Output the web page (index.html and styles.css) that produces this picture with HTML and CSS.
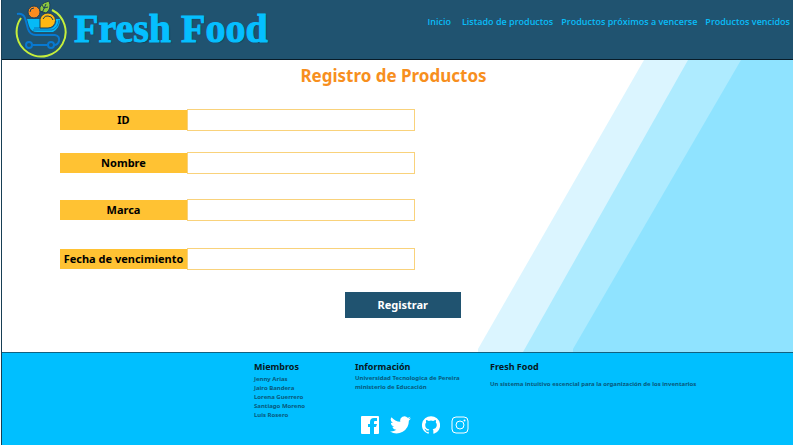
FILE: index.html
```html
<!DOCTYPE html>
<html lang="es">
<head>
<meta charset="utf-8">
<meta name="viewport" content="width=device-width, initial-scale=1">
<title>Fresh Food</title>
<link rel="stylesheet" href="styles.css">
</head>
<body>
<div class="page">
  <header class="header">
    <a class="brand" href="#">
      <svg class="brand-mark" viewBox="0 0 54 60" aria-hidden="true">
        <path d="M8 18A24.500 24.500 0 1 0 39 10" fill="none" stroke="#c6ef3c" stroke-width="2"/>
        <circle cx="21" cy="12" r="6" fill="#fb8c1e" stroke="#1d4057"/>
        <path d="M17 12q0-4 4-4" fill="none" stroke="#1d4057"/>
        <path d="M14 19h33q0 9-7 13H24q-6 0-8-6z" fill="#06baf7"/>
        <path d="M20 30h19q6-2 7-10M21 28h17q4-1 5-7" fill="none" stroke="#0a70b8"/>
        <path d="M27 28V19q2-6 8-6a7.500 7.500 0 0 1 0 15z" fill="#feb813" stroke="#1d4057"/>
        <path d="M30 19q2-4 5-3 4 0 5 4" fill="none" stroke="#1d4057"/>
        <path d="M27 11q-2-7 9-10 3 8-3 12z" fill="#8ac63f" stroke="#1d4057"/>
        <path d="M33 4l-4 9M31 8l4-1M31 8l-2-3" fill="none" stroke="#1d4057"/>
        <path d="M4 14q6-1 8 4l3 11q2 6 8 6h19q5 1 4 6-1 4-5 4H19" fill="none" stroke="#0879d1" stroke-width="2"/>
        <circle cx="16" cy="45" r="3" fill="#205370" stroke="#0879d1" stroke-width="2"/>
        <circle cx="38" cy="45" r="3" fill="#205370" stroke="#0879d1" stroke-width="2"/>
      </svg>
      <span class="brand-name">Fresh Food</span>
    </a>
    <nav class="nav">
      <a href="#">Inicio</a>
      <a href="#">Listado de productos</a>
      <a href="#">Productos próximos a vencerse</a>
      <a href="#">Productos vencidos</a>
    </nav>
  </header>

  <main class="main">
    <svg class="stripes" viewBox="0 0 320 292" preserveAspectRatio="xMaxYMin slice" aria-hidden="true">
      <path d="M171 0H320V292H5V289z" fill="#dbf5ff"/>
      <path d="M215 0H320V292H50z" fill="#aeebff"/>
      <path d="M268 0H320V292H100V289z" fill="#8fe3ff"/>
    </svg>
    <h1 class="title">Registro de Productos</h1>
    <form class="form">
      <div class="fields">
        <div class="field"><label for="id">ID</label><input id="id" type="text"></div>
        <div class="field"><label for="nombre">Nombre</label><input id="nombre" type="text"></div>
        <div class="field"><label for="marca">Marca</label><input id="marca" type="text"></div>
        <div class="field"><label for="fecha">Fecha de vencimiento</label><input id="fecha" type="text"></div>
      </div>
      <button class="submit" type="button">Registrar</button>
    </form>
  </main>

  <footer class="footer">
    <section>
      <h2>Miembros</h2>
      <ul>
        <li>Jenny Arias</li>
        <li>Jairo Bandera</li>
        <li>Lorena Guerrero</li>
        <li>Santiago Moreno</li>
        <li>Luis Rosero</li>
      </ul>
    </section>
    <section class="info">
      <h2>Información</h2>
      <p>Universidad Tecnologica de Pereira</p>
      <p>ministerio de Educación</p>
      <div class="social">
        <a href="#" aria-label="Facebook"><svg viewBox="0 0 18 18"><path fill="#fff" d="M1 0h16q1 0 1 1v16q0 1-1 1h-4v-7h2l1-3h-3V6q0-1 1-1h2V2h-3q-4 0-4 4v2H7v3h2v7H1q-1 0-1-1V1q0-1 1-1z"/></svg></a>
        <a href="#" aria-label="Twitter"><svg class="wide" viewBox="0 0 24 20"><path fill="#fff" d="M24 2.400a9.800 9.800 0 0 1-2.800.8A4.900 4.900 0 0 0 23.300.5a9.900 9.900 0 0 1-3.100 1.200 4.900 4.900 0 0 0-8.400 4.500A14 14 0 0 1 1.700 1a4.900 4.900 0 0 0 1.500 6.600A4.900 4.900 0 0 1 1 7a4.900 4.900 0 0 0 3.900 4.900 5 5 0 0 1-2.200.1 4.900 4.900 0 0 0 4.600 3.400A9.900 9.900 0 0 1 0 17.400 14 14 0 0 0 21.500 5 10 10 0 0 0 24 2.400z"/></svg></a>
        <a href="#" aria-label="GitHub"><svg viewBox="0 0 24 24"><path fill="#fff" d="M12 .3a12 12 0 0 0-3.800 23.400c.6.100.8-.3.800-.6v-2c-3.300.7-4-1.600-4-1.600-.6-1.400-1.400-1.800-1.400-1.800-1-.7.100-.7.100-.7 1.200 0 1.900 1.200 1.900 1.200 1 1.800 2.800 1.300 3.500 1 0-.8.400-1.300.7-1.600-2.700-.3-5.500-1.300-5.500-6 0-1.200.5-2.300 1.300-3.100-.2-.4-.6-1.600 0-3.200 0 0 1-.3 3.400 1.200a11.500 11.500 0 0 1 6 0c2.300-1.500 3.300-1.200 3.300-1.200.7 1.600.2 2.800.1 3.200.8.800 1.300 1.900 1.300 3.200 0 4.600-2.800 5.600-5.500 5.900.5.400.9 1 .9 2.200v3.300c0 .3.100.7.800.6A12 12 0 0 0 12 .3z"/></svg></a>
        <a href="#" aria-label="Instagram"><svg viewBox="0 0 18 18" fill="none" stroke="#fff"><rect x="1" y="1" width="16" height="16" rx="4"/><circle cx="9" cy="9" r="4"/><circle cx="13.500" cy="4.500" r="1" fill="#fff" stroke="none"/></svg></a>
      </div>
    </section>
    <section class="about">
      <h2>Fresh Food</h2>
      <p>Un sistema intuitivo escencial para la organización de los inventarios</p>
    </section>
  </footer>
</div>
</body>
</html>
```
FILE: styles.css
```css
* { box-sizing: border-box; }
body, h1, h2, p, ul { margin: 0; padding: 0; }
body {
  background: #fff;
  color: #071722;
  font-family: "Noto Sans", "Open Sans", sans-serif;
  font-weight: 700;
}
a { color: inherit; text-decoration: none; }
.page {
  display: flex;
  flex-direction: column;
  min-height: 100vh;
  margin-left: 1px;
  border-left: 1px solid #173f55;
}
.header {
  display: flex;
  justify-content: space-between;
  background: #205370;
  border-bottom: 1px solid #081c29;
  color: #08bdf8;
}
.brand { display: flex; align-items: center; padding-left: 11px; gap: 7px; height: 59px; }
.brand-mark { width: 54px; height: 60px; }
.brand-name {
  color: #05bfff;
  font-family: "Liberation Serif", serif;
  font-size: 40px;
  line-height: 56px;
  padding-bottom: 2px;
  -webkit-text-stroke: 1px #05bfff;
  text-shadow: 1px 1px 1px #173f55;
}
.nav {
  display: flex;
  gap: 8px;
  padding: 14px 3px 0 0;
  font-family: "Open Sans", sans-serif;
  font-size: 9px;
  font-weight: 600;
  line-height: 16px;
  white-space: nowrap;
}
.nav a:first-child { margin-right: 3px; }
.main { position: relative; flex: 1; }
.stripes { position: absolute; top: 0; right: 0; height: 100%; aspect-ratio: 320 / 292; }
.title {
  position: relative;
  padding: 4px 8px 0 0;
  color: #f78f1e;
  font-size: 17px;
  line-height: 24px;
  text-align: center;
}
.form {
  position: relative;
  display: flex;
  flex-direction: column;
  gap: 22px;
  width: 58%;
  padding: 21px 0 32px 58px;
}
.fields { display: grid; grid-template-rows: 43px 47px 49px 22px; margin-right: 46px; }
.field { display: grid; grid-template-columns: 127px 1fr; height: 22px; }
.field label {
  margin: 1px 0;
  background: #ffc233;
  color: #000;
  font-size: 11px;
  line-height: 20px;
  text-align: center;
  white-space: nowrap;
}
.field input {
  width: 100%;
  min-width: 0;
  border: 1px solid #f9d27b;
  background: #fff;
  font: inherit;
  font-size: 11px;
}
.submit {
  align-self: flex-end;
  width: 116px;
  height: 26px;
  padding: 0 0 2px;
  border: 0;
  background: #205370;
  color: #fff;
  font: inherit;
  font-size: 11px;
}
.footer {
  display: grid;
  grid-template-columns: 101px 135px 1fr;
  padding: 7px 0 11px 252px;
  border-top: 1px solid #126180;
  background: #00bfff;
}
.footer h2 { font-size: 9px; line-height: 14px; }
.footer ul { list-style: none; padding-top: 1px; }
.footer li, .footer p { color: #08597c; font-size: 6px; line-height: 9px; white-space: nowrap; }
.about p { padding-top: 6px; }
.social { display: flex; align-items: center; gap: 11px; padding: 24px 0 0 6px; }
.social svg { display: block; width: 18px; height: 18px; }
.social .wide { width: 21px; }
```
